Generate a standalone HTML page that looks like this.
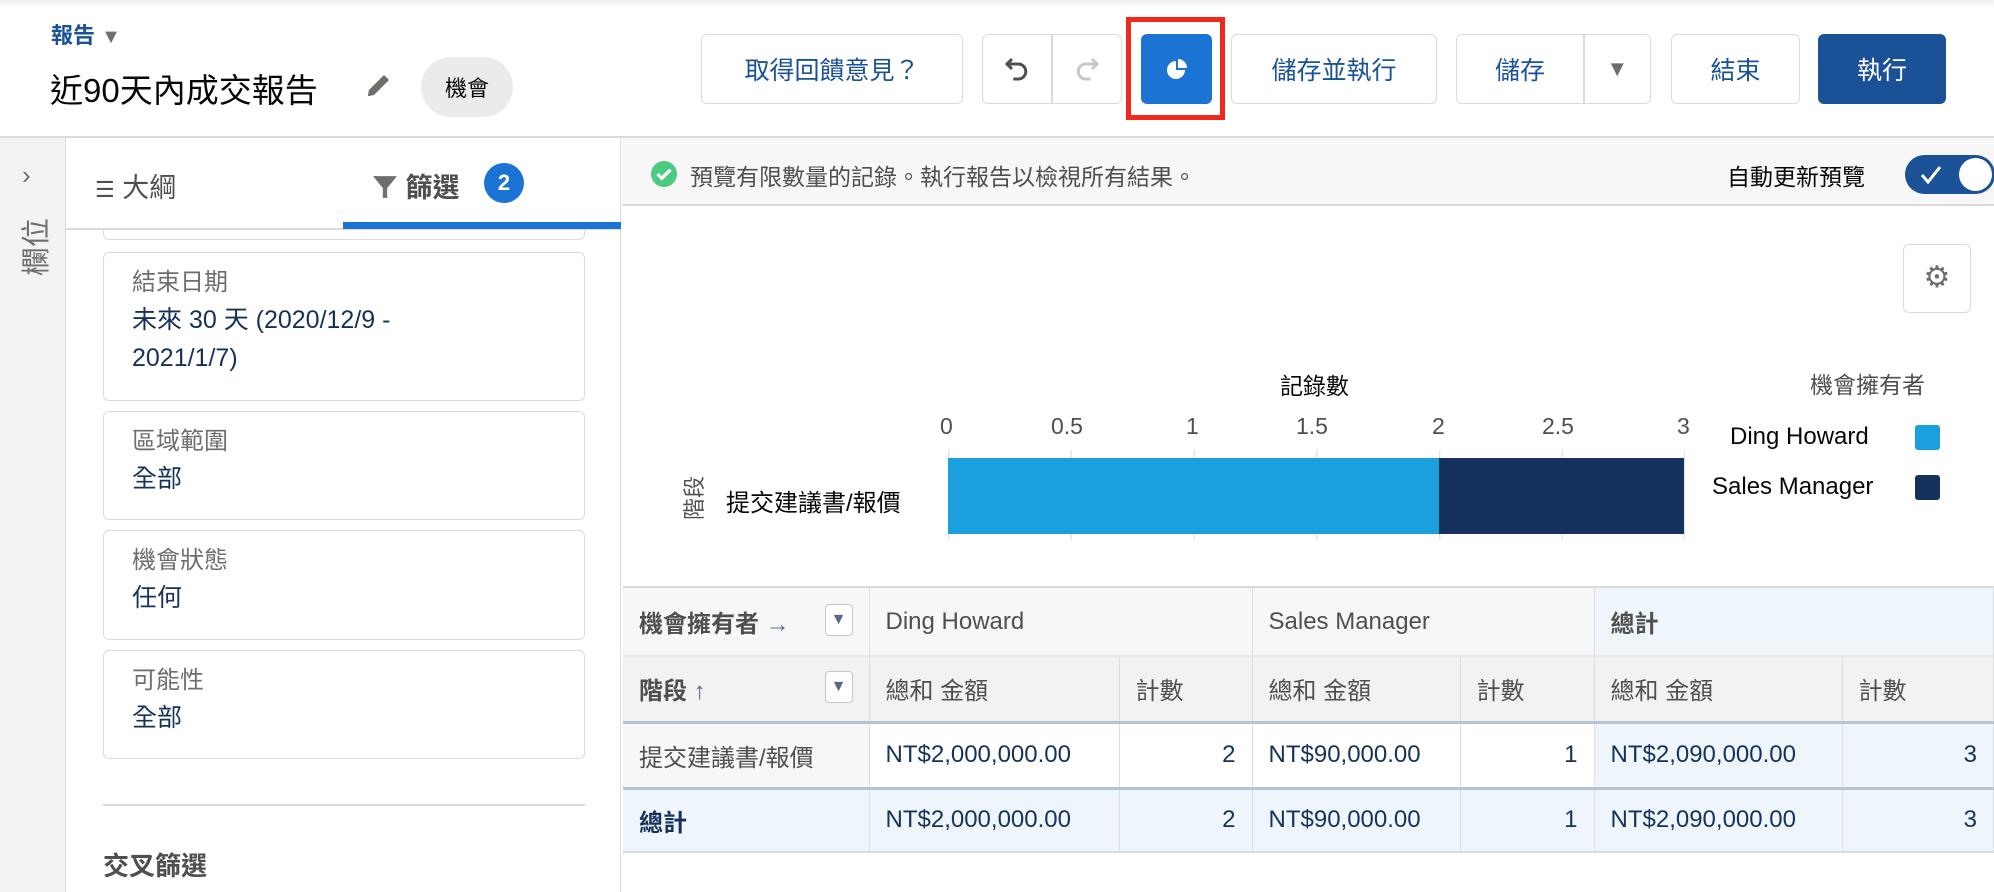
<!DOCTYPE html>
<html><head><meta charset="utf-8"><style>
*{margin:0;padding:0;box-sizing:border-box}
body{width:1994px;height:892px;overflow:hidden;background:#fff;font-family:"Liberation Sans","Noto Sans CJK TC",sans-serif;position:relative;color:#080707}
.a{position:absolute}
.btn{position:absolute;top:34px;height:70px;border:1.5px solid #dddbda;border-radius:6px;background:#fff;color:#1b5297;font-size:25px;display:flex;align-items:center;justify-content:center}
.card{position:absolute;left:103px;width:482px;border:1.5px solid #dddbda;border-radius:6px;padding:12px 0 0 28px}
.card .l{font-size:24px;color:#706e6b;line-height:36px}
.card .v{font-size:25px;color:#16325c;line-height:38px}
td{border-right:1.5px solid #d8dde6;font-size:24px;padding:0 16px;color:#16325c;white-space:nowrap;vertical-align:middle}
table{border-collapse:collapse;position:absolute;left:623px;top:586px;width:1371px}
tr.h td{background:#f7f7f7;color:#514f4d}
tr.h2 td{background:#f3f2f2;color:#514f4d}
.r{text-align:right}
.bl{background:#eef6fc!important}
.dd{display:inline-block;width:28px;height:32px;border:1.5px solid #c9c7c5;border-radius:4px;float:right;text-align:center;color:#54698d;font-size:16px;line-height:30px;background:#fff}
</style></head><body>
<div class="a" style="left:0;top:0;width:1994px;height:8px;background:linear-gradient(#f0f0f0,#fff)"></div>
<div class="a" style="left:51px;top:18px;font-size:22px;color:#1b5297;font-weight:bold">報告 <span style="color:#706e6b;font-size:20px">▼</span></div>
<div class="a" style="left:50px;top:64px;font-size:33px">近90天內成交報告</div>
<svg class="a" style="left:364px;top:70px" width="30" height="30" viewBox="0 0 24 24"><path d="M3 21l1-5L16 4l4 4L8 20z" fill="#706e6b"/></svg>
<div class="a" style="left:421px;top:57px;width:92px;height:60px;border-radius:30px;background:#ecebea;font-size:22px;display:flex;align-items:center;justify-content:center">機會</div>
<div class="btn" style="left:701px;width:262px">取得回饋意見？</div>
<div class="btn" style="left:982px;width:140px"><span style="width:70px;display:flex;justify-content:center"><svg width="30" height="30" viewBox="0 0 24 24"><path d="M8 4L4 8l4 4M4 8h9a6 6 0 0 1 0 12H9" stroke="#514f4d" stroke-width="2.4" fill="none"/></svg></span><span style="width:1.5px;height:68px;background:#dddbda"></span><span style="width:70px;display:flex;justify-content:center"><svg width="30" height="30" viewBox="0 0 24 24"><path d="M16 4l4 4-4 4M20 8h-9a6 6 0 0 0 0 12h4" stroke="#c9c7c5" stroke-width="2.4" fill="none"/></svg></span></div>
<div class="a" style="left:1126px;top:17px;width:99px;height:103px;border:5px solid #f0281e"></div>
<div class="btn" style="left:1141px;width:71px;background:#1b73d4;border-color:#1b73d4"><svg width="24" height="26" viewBox="0 0 24 24"><path d="M11 4A9 9 0 1 0 20 13H11z" fill="#fff"/><path d="M13 2v9h9A9 9 0 0 0 13 2z" fill="#fff"/></svg></div>
<div class="btn" style="left:1231px;width:206px">儲存並執行</div>
<div class="btn" style="left:1456px;width:195px;justify-content:flex-start"><span style="width:127px;text-align:center">儲存</span><span style="width:1.5px;height:68px;background:#dddbda"></span><span style="width:66px;text-align:center;color:#706e6b;font-size:22px">▼</span></div>
<div class="btn" style="left:1671px;width:129px">結束</div>
<div class="btn" style="left:1818px;width:128px;background:#1b5297;border-color:#1b5297;color:#fff">執行</div>
<div class="a" style="left:0;top:136px;width:1994px;height:2px;background:#dddbda"></div>
<!-- left rail -->
<div class="a" style="left:0;top:138px;width:66px;height:754px;background:#f3f3f3;border-right:1.5px solid #dddbda"></div>
<div class="a" style="left:22px;top:160px;font-size:26px;color:#706e6b">›</div>
<div class="a" style="left:2px;top:226px;width:64px;text-align:center;font-size:29px;color:#706e6b;transform:rotate(-90deg)">欄位</div>
<!-- tabs -->
<div class="a" style="left:66px;top:138px;width:555px;height:754px;border-right:1.5px solid #d8dde6"></div>
<div class="a" style="left:103px;top:200px;width:482px;height:40px;border:1.5px solid #dddbda;border-top:none;border-radius:0 0 6px 6px"></div>
<div class="a" style="left:67px;top:138px;width:553px;height:90px;background:#fff"></div>
<div class="a" style="left:95px;top:166px;font-size:27px;color:#514f4d"><span style="font-size:22px">☰</span> 大綱</div>
<div class="a" style="left:372px;top:166px;font-size:27px;color:#514f4d;font-weight:bold"><svg width="26" height="28" viewBox="0 0 24 24" style="vertical-align:-4px"><path d="M1 2h22l-9 11v9h-4v-9z" fill="#706e6b"/></svg> 篩選</div>
<div class="a" style="left:484px;top:163px;width:40px;height:40px;border-radius:20px;background:#1b73d4;color:#fff;font-weight:bold;font-size:22px;text-align:center;line-height:40px">2</div>
<div class="a" style="left:66px;top:228px;width:555px;height:2px;background:#dddbda"></div>
<div class="a" style="left:343px;top:222px;width:278px;height:7px;background:#1b73d4"></div>
<div class="card" style="top:252px;height:149px"><div class="l">結束日期</div><div class="v">未來 30 天 (2020/12/9 -<br>2021/1/7)</div></div>
<div class="card" style="top:411px;height:109px"><div class="l">區域範圍</div><div class="v">全部</div></div>
<div class="card" style="top:530px;height:110px"><div class="l">機會狀態</div><div class="v">任何</div></div>
<div class="card" style="top:650px;height:109px"><div class="l">可能性</div><div class="v">全部</div></div>
<div class="a" style="left:103px;top:804px;width:482px;height:2px;background:#dddbda"></div>
<div class="a" style="left:103px;top:846px;font-size:26px;color:#514f4d;font-weight:bold">交叉篩選</div>
<!-- info bar -->
<div class="a" style="left:622px;top:138px;width:1372px;height:68px;background:#f7f7f7;border-bottom:2px solid #dddbda"></div>
<svg class="a" style="left:651px;top:161px" width="26" height="26" viewBox="0 0 24 24"><circle cx="12" cy="12" r="12" fill="#4bca81"/><path d="M6 12l4 4 8-8" stroke="#fff" stroke-width="3" fill="none"/></svg>
<div class="a" style="left:690px;top:158px;font-size:23px;color:#514f4d">預覽有限數量的記錄。執行報告以檢視所有結果。</div>
<div class="a" style="left:1727px;top:158px;font-size:23px;color:#080707">自動更新預覽</div>
<div class="a" style="left:1905px;top:155px;width:90px;height:39px;border-radius:20px;background:#1b5297"></div>
<svg class="a" style="left:1918px;top:163px" width="26" height="24" viewBox="0 0 24 24"><path d="M3 12l6 7L21 4" stroke="#fff" stroke-width="3" fill="none"/></svg>
<div class="a" style="left:1959px;top:158px;width:33px;height:33px;border-radius:17px;background:#fff"></div>
<!-- gear -->
<div class="a" style="left:1903px;top:244px;width:68px;height:69px;border:1.5px solid #dddbda;border-radius:6px;text-align:center;line-height:66px;font-size:30px;color:#706e6b">⚙</div>
<!-- chart -->
<div class="a" style="left:1280px;top:367px;font-size:23px">記錄數</div>
<div class="a" style="left:948px;top:413px;width:750px;font-size:23px;color:#514f4d">
<span class="a" style="left:-8px">0</span><span class="a" style="left:103px">0.5</span><span class="a" style="left:238px">1</span><span class="a" style="left:348px">1.5</span><span class="a" style="left:484px">2</span><span class="a" style="left:594px">2.5</span><span class="a" style="left:729px">3</span></div>
<div class="a" style="left:948px;top:450px;width:737px;height:90px;background:repeating-linear-gradient(90deg,#e5e5e5 0 1.5px,transparent 1.5px 122.7px)"></div>
<div class="a" style="left:948px;top:458px;width:491px;height:76px;background:#1b9fde"></div>
<div class="a" style="left:1439px;top:458px;width:245px;height:76px;background:#16325c"></div>
<div class="a" style="left:726px;top:483px;font-size:24px">提交建議書/報價</div>
<div class="a" style="left:665px;top:482px;width:56px;text-align:center;font-size:22px;color:#514f4d;transform:rotate(-90deg)">階段</div>
<div class="a" style="left:1810px;top:366px;font-size:23px;color:#514f4d">機會擁有者</div>
<div class="a" style="left:1730px;top:423px;font-size:24px">Ding Howard</div>
<div class="a" style="left:1915px;top:425px;width:25px;height:25px;background:#1b9fde;border-radius:3px"></div>
<div class="a" style="left:1712px;top:473px;font-size:24px">Sales Manager</div>
<div class="a" style="left:1915px;top:475px;width:25px;height:25px;background:#16325c;border-radius:3px"></div>
<!-- table -->
<table>
<tr class="h" style="height:69px;border-top:2px solid #dddbda"><td style="width:246px;font-weight:bold">機會擁有者 <span style="color:#54698d">→</span><span class="dd">▼</span></td><td colspan="2" style="width:383px">Ding Howard</td><td colspan="2" style="width:342px">Sales Manager</td><td colspan="2" class="bl" style="font-weight:bold">總計</td></tr>
<tr class="h2" style="height:66px;border-top:2px solid #e5e5e5"><td style="font-weight:bold">階段 <span style="color:#54698d">↑</span><span class="dd">▼</span></td><td style="width:250px">總和 金額</td><td style="width:133px">計數</td><td style="width:208px">總和 金額</td><td style="width:134px">計數</td><td style="width:248px">總和 金額</td><td>計數</td></tr>
<tr style="height:66px;border-top:3px solid #b6c3d1"><td style="background:#f7f7f7;color:#514f4d">提交建議書/報價</td><td>NT$2,000,000.00</td><td class="r">2</td><td>NT$90,000.00</td><td class="r">1</td><td class="bl">NT$2,090,000.00</td><td class="r bl">3</td></tr>
<tr style="height:64px;border-top:3px solid #b6c3d1;border-bottom:2px solid #dddbda"><td class="bl" style="font-weight:bold">總計</td><td class="bl">NT$2,000,000.00</td><td class="r bl">2</td><td class="bl">NT$90,000.00</td><td class="r bl">1</td><td class="bl">NT$2,090,000.00</td><td class="r bl">3</td></tr>
</table>
</body></html>
